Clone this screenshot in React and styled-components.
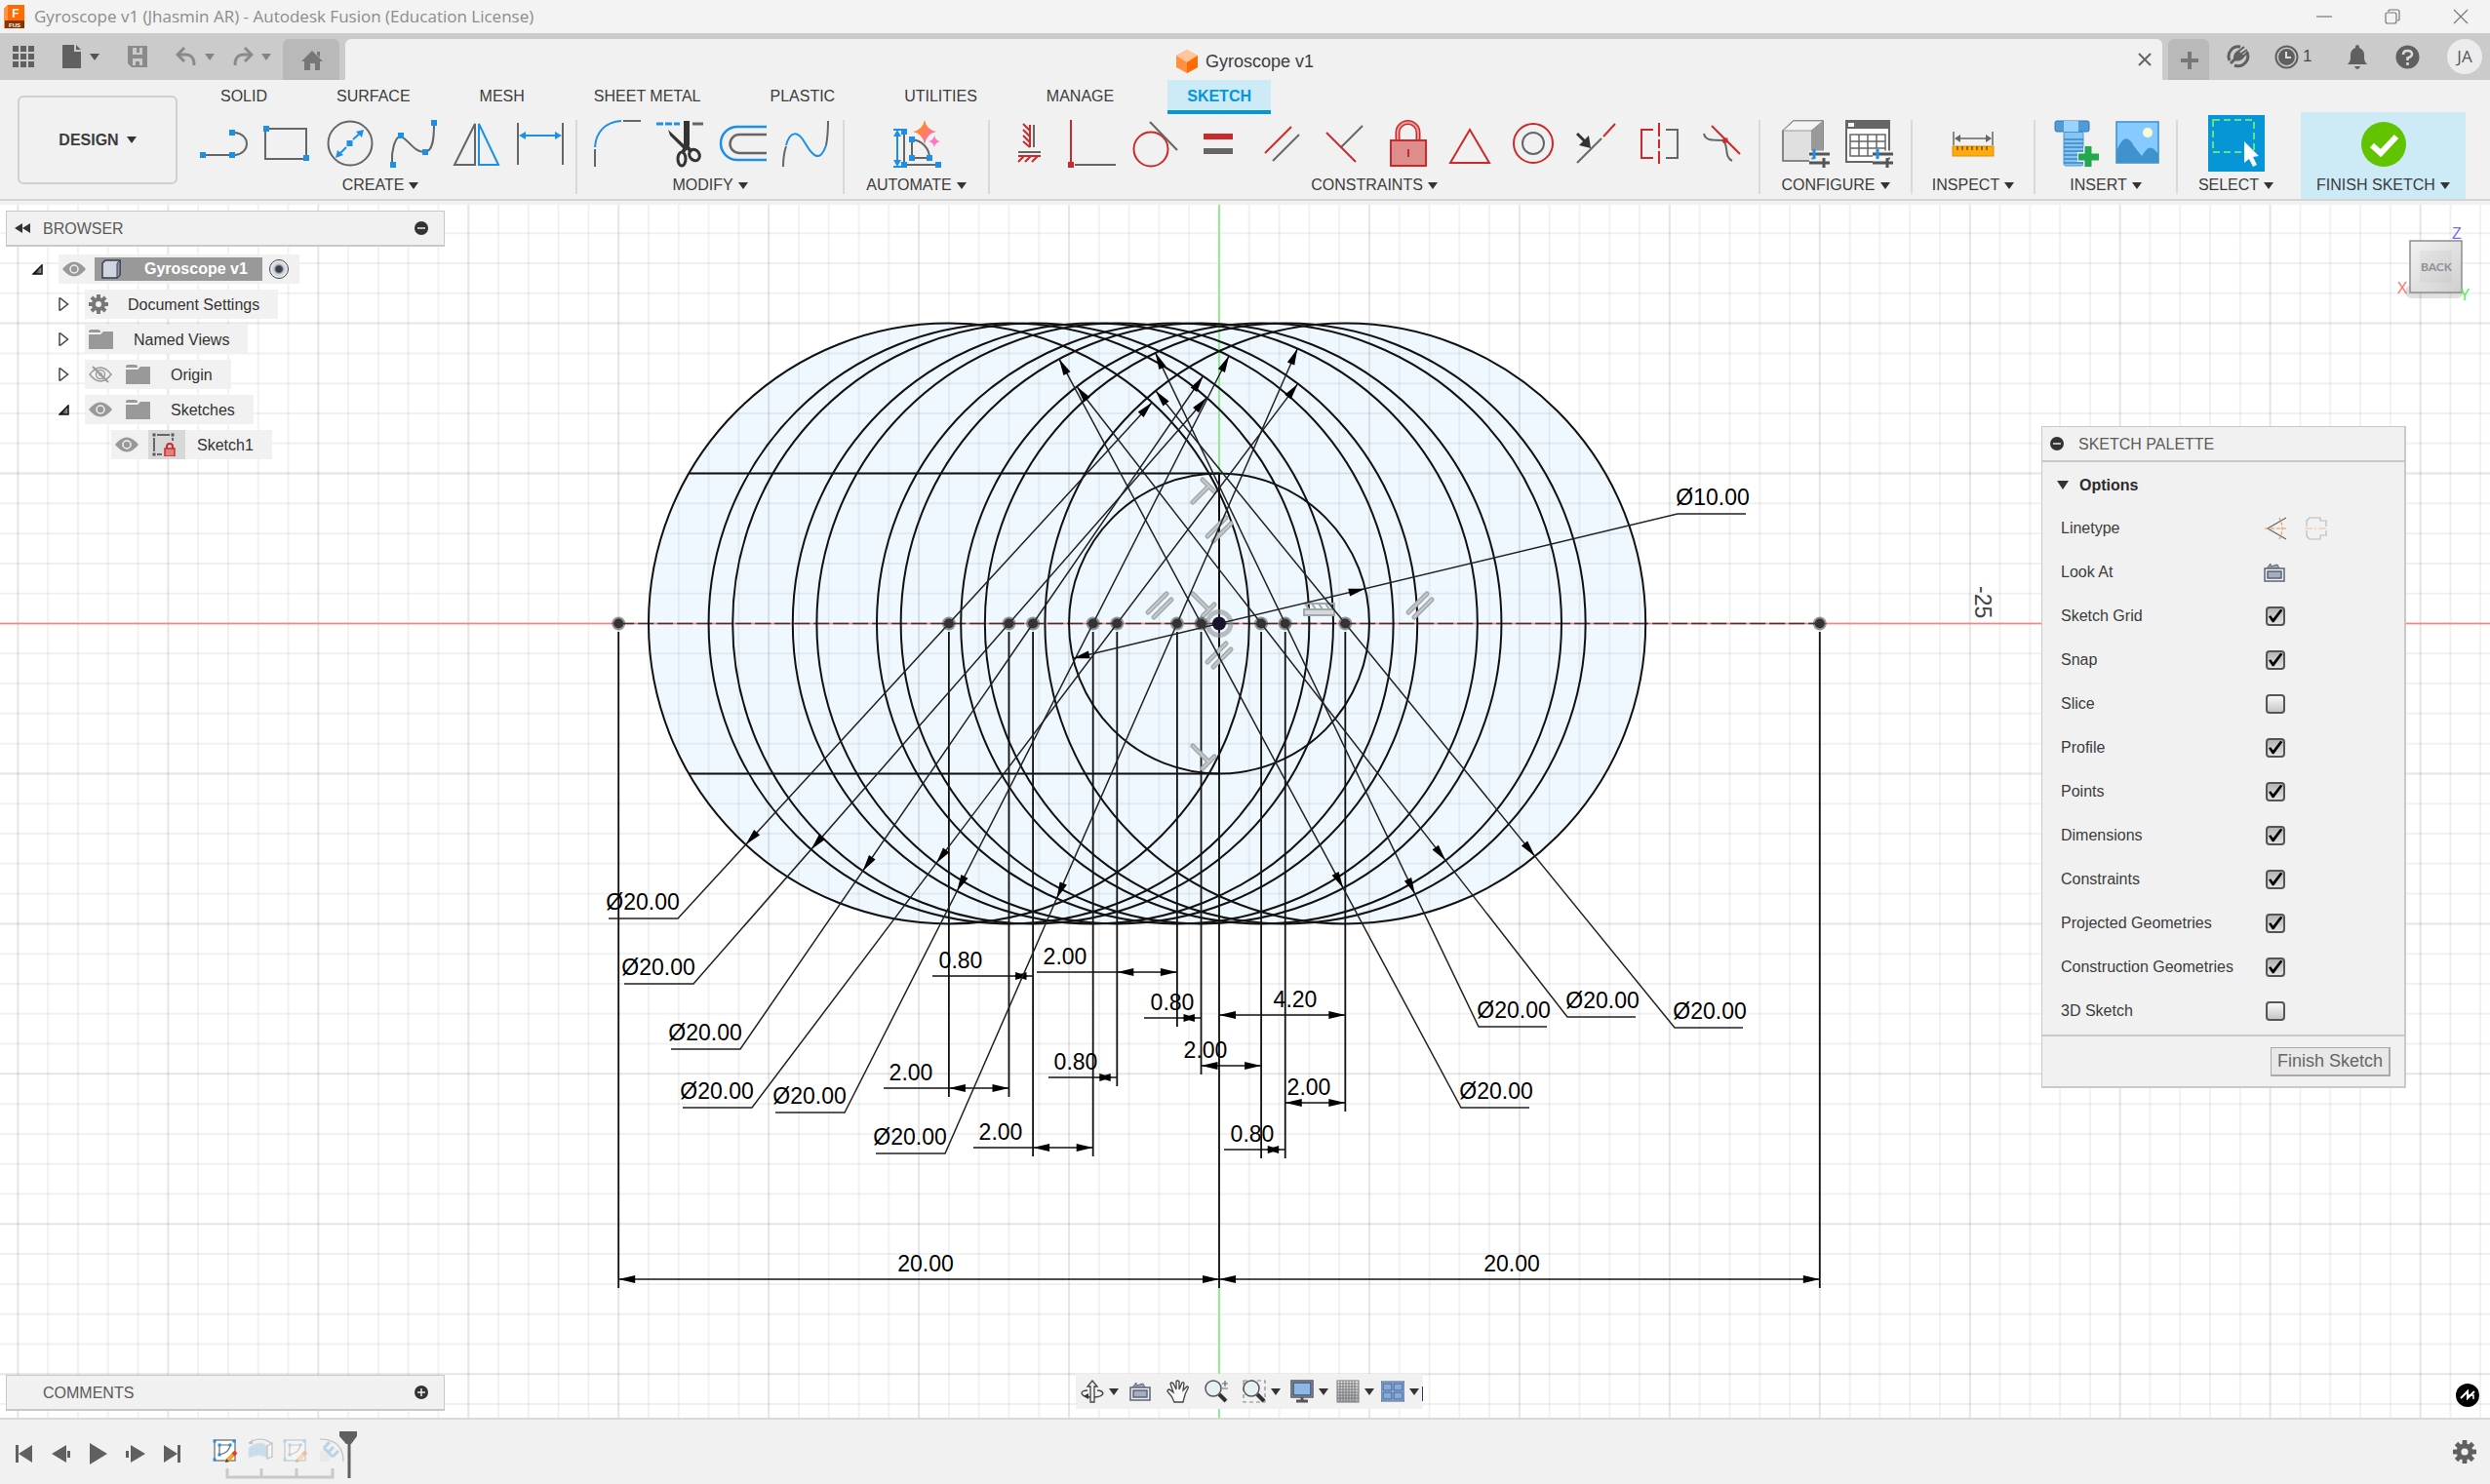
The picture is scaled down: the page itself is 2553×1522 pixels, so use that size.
import React from "react";
import styled, { createGlobalStyle, css } from "styled-components";

const GlobalStyle = createGlobalStyle`
  *, *::before, *::after { box-sizing: border-box; }
  body {
    margin: 0;
    background: #f1f1f1;
    color: #3c3c3c;
    font: 16px/20px "Liberation Sans", Arial, sans-serif;
  }
  button, input { font: inherit; color: inherit; }
  button { background: none; border: 0; padding: 0; cursor: pointer; }
  svg { display: block; flex: none; }
`;

const GRAY = "#666";
const BLUE = "#1c8fe6";
const RED = "#cc2a2a";

/* ---------- shell ---------- */

const Shell = styled.div`
  min-height: 100vh;
  display: flex;
  flex-direction: column;
`;

const TitleBar = styled.header`
  height: 34px;
  flex: none;
  display: flex;
  align-items: center;
  gap: 8px;
  padding-left: 3px;
  background: #f3f3f3;
`;

const WindowTitle = styled.h1`
  margin: 0;
  flex: 1;
  font: 400 17px/22px "Open Sans", "Noto Sans", sans-serif;
  color: #8c8c8c;
`;

const WindowControls = styled.div`
  display: flex;
  gap: 10px;
`;

const WindowButton = styled.button`
  width: 60px;
  height: 32px;
  display: grid;
  place-items: center;
`;

const TabBar = styled.div`
  height: 48px;
  flex: none;
  display: flex;
  align-items: flex-start;
  background: #cbcbcb;
  padding-top: 6px;
`;

const QuickTools = styled.div`
  width: 290px;
  height: 36px;
  flex: none;
  display: flex;
  align-items: center;
  padding-left: 12px;
`;

const ToolButton = styled.button`
  display: flex;
  align-items: center;
  gap: 8px;
  width: ${(p) => p.$w}px;
  height: 36px;
  opacity: ${(p) => (p.$faded ? 0.6 : 1)};
`;

const SideTab = styled.button`
  width: ${(p) => p.$w}px;
  height: 42px;
  flex: none;
  display: grid;
  place-items: center;
  padding: 2px 0 0 2px;
  background: #b9b9b9;
  border-radius: 6px 6px 0 0;
`;

const DocTab = styled.div`
  flex: 1;
  height: 42px;
  margin: 0 6px;
  padding: 0 8px 0 10px;
  display: flex;
  align-items: center;
  background: #f1f1f1;
  border-radius: 6px 6px 0 0;
`;

const DocName = styled.div`
  flex: 1;
  display: flex;
  align-items: center;
  justify-content: center;
  gap: 8px;
  padding-top: 4px;
  font-size: 18px;
  line-height: 24px;
`;

const CloseTab = styled.button`
  width: 20px;
  height: 20px;
  display: grid;
  place-items: center;
`;

const Account = styled.div`
  width: 288px;
  height: 36px;
  flex: none;
  display: flex;
  align-items: center;
  padding-left: 17px;
`;

const JobCount = styled.span`
  font-size: 17px;
  color: #4a4a4a;
  margin-left: -4px;
`;

const Avatar = styled.button`
  width: 36px;
  height: 36px;
  border-radius: 50%;
  background: #ececec;
  color: #555;
  font: 400 17px/36px "Open Sans", "Noto Sans", sans-serif;
`;

/* ---------- ribbon ---------- */

const Ribbon = styled.div`
  height: 128px;
  flex: none;
  display: flex;
  background: #f1f1f1;
  padding-bottom: 4px;
`;

const RibbonInner = styled.div`
  flex: 1;
  display: flex;
  border-bottom: 2px solid #d5d5d5;
`;

const Workspace = styled.button`
  width: 164px;
  height: 91px;
  margin: 16px 8px 0 18px;
  flex: none;
  display: flex;
  align-items: center;
  justify-content: center;
  gap: 8px;
  border: 2px solid #d0d0d0;
  border-radius: 6px;
  font-weight: 700;
`;

const RibbonMain = styled.div`
  flex: 1;
  display: flex;
  flex-direction: column;
`;

const TabList = styled.nav`
  display: flex;
  gap: 31px;
  height: 35px;
  padding-left: 16px;
`;

const RibbonTab = styled.button`
  height: 35px;
  padding: 2px 20px 0;
  border-bottom: 4px solid transparent;
  ${(p) =>
    p.$active &&
    css`
      margin-left: 4px;
      background: #cdeaf7;
      border-color: #0696d7;
      color: #0696d7;
      font-weight: 700;
    `}
`;

const Groups = styled.div`
  flex: 1;
  display: flex;
`;

const Group = styled.section`
  width: ${(p) => p.$w}px;
  height: 76px;
  margin-top: 6px;
  display: flex;
  flex-direction: column;
  justify-content: space-between;
  border-right: 2px solid ${(p) => (p.$last ? "transparent" : "#d9d9d9")};
`;

const Icons = styled.div`
  display: flex;
  justify-content: ${(p) => (p.$single ? "center" : "space-between")};
  padding: 0 ${(p) => Math.max(p.$pad - 3, 0)}px 0 ${(p) => p.$pad}px;
`;

const IconButton = styled.button`
  width: 48px;
  height: 48px;
`;

const Caption = styled.button`
  display: flex;
  align-items: center;
  justify-content: center;
  gap: 5px;
  line-height: 18px;
`;

const Caret = styled.i`
  width: 0;
  height: 0;
  flex: none;
  border: 5px solid transparent;
  border-top: 7px solid ${(p) => p.$color || "#333"};
  border-bottom: 0;
`;

const SelectTile = styled.button`
  width: 58px;
  height: 58px;
  margin: -5px 0 -5px;
  background: #0696d7;
`;

const FinishGroup = styled.section`
  width: 169px;
  margin: -2px 27px 0 5px;
  padding: 9px 0 5px;
  display: flex;
  flex-direction: column;
  align-items: center;
  justify-content: space-between;
  background: #cdeaf7;
`;

/* ---------- canvas ---------- */

const Stage = styled.main`
  flex: 1;
  position: relative;
  display: flex;
  background: #fff;
`;

const Drawing = styled.svg`
  position: absolute;
  inset: 0;
  width: 100%;
  height: 100%;
`;

const Overlay = styled.div`
  position: relative;
  flex: 1;
  display: grid;
  grid-template-columns: 450px 1fr 447px;
  padding: 6px 0 7px 6px;
`;

const LeftColumn = styled.aside`
  display: flex;
  flex-direction: column;
  justify-content: space-between;
`;

const PanelBar = styled.div`
  height: 37px;
  display: flex;
  align-items: center;
  padding: 0 16px 0 8px;
  background: #f1f1f1;
  border: 1px solid #c9c9c9;
  border-bottom-width: 2px;
  color: #5a5a5a;
`;

const PanelTitle = styled.h2`
  flex: 1;
  margin: 0 0 0 ${(p) => p.$gap}px;
  padding-top: 2px;
  font-size: 16px;
  line-height: 20px;
  font-weight: 400;
`;

const Tree = styled.ul`
  list-style: none;
  margin: 8px 0 0;
  padding: 0;
  display: flex;
  flex-direction: column;
  gap: 6px;
`;

const TreeRow = styled.li`
  display: flex;
  align-items: center;
  height: 30px;
  padding-left: ${(p) => 27 + p.$level * 27}px;
`;

const Twisty = styled.button`
  width: 27px;
  height: 30px;
  flex: none;
  display: flex;
  align-items: center;
`;

const Cells = styled.div`
  height: 30px;
  display: flex;
  align-items: center;
  background: #f1f1f1;
`;

const Cell = styled.span`
  width: ${(p) => p.$w || 38}px;
  height: 30px;
  display: flex;
  align-items: center;
  padding-left: 4px;
  background: ${(p) => (p.$shaded ? "#d8d8d8" : "transparent")};
`;

const NodeName = styled.span`
  padding: 1px 19px 0 ${(p) => p.$left}px;
  color: #333;
`;

const Selected = styled.span`
  height: 24px;
  display: flex;
  align-items: center;
  gap: 24px;
  padding: 0 15px 0 7px;
  background: #999;
  color: #fff;
  font-weight: 700;
`;

const ActiveRadio = styled.input`
  appearance: none;
  width: 20px;
  height: 20px;
  margin: 0 11px 0 7px;
  border: 1px solid #444;
  border-radius: 50%;
  background: radial-gradient(circle, #3a3f48 0 3px, #c3c8d3 5px, #f4f5f8 9px);
`;

const NavArea = styled.div`
  display: flex;
  align-items: flex-end;
  justify-content: center;
`;

const NavBar = styled.div`
  width: 356px;
  height: 36px;
  margin-bottom: 2px;
  display: flex;
  align-items: center;
  padding-left: 5px;
  background: #f1f1f1;
`;

const NavButton = styled.button`
  width: ${(p) => p.$w}px;
  flex: none;
  display: flex;
  align-items: center;
  gap: 5px;
`;

const NavEnd = styled.span`
  width: 1px;
  height: 15px;
  margin: 4px 0 0 auto;
  background: #2f3e5c;
`;

const RightColumn = styled.aside`
  display: flex;
  flex-direction: column;
  align-items: flex-end;
`;

const Palette = styled.form`
  width: 374px;
  margin: 221px 86px 0 0;
  background: #f1f1f1;
  border: 1px solid #c9c9c9;
  border-width: 1px 2px 2px 1px;
`;

const PaletteHeader = styled.div`
  height: 36px;
  display: flex;
  align-items: center;
  padding-left: 8px;
  border-bottom: 2px solid #c9c9c9;
  color: #5a5a5a;
`;

const PaletteBody = styled.div`
  padding-bottom: 2px;
`;

const SectionToggle = styled.button`
  width: 100%;
  height: 45px;
  display: flex;
  align-items: center;
  gap: 11px;
  padding: 2px 0 0 15px;
  font-weight: 700;
  color: #2b2b2b;
`;

const BigCaret = styled.i`
  width: 0;
  height: 0;
  border: 6px solid transparent;
  border-top: 9px solid #333;
  border-bottom: 0;
`;

const Option = styled.div`
  height: 45px;
  display: flex;
  align-items: center;
  padding-left: 19px;
`;

const OptionLabel = styled.label`
  width: 210px;
`;

const OptionTools = styled.span`
  display: flex;
  gap: 18px;
  margin-left: -2px;
`;

const Tick = styled.input`
  appearance: none;
  width: 20px;
  height: 20px;
  margin: 0;
  border: 2px solid #555;
  border-radius: 4px;
  background: linear-gradient(#f8f8f8, #c6c6c6);
  &:checked {
    background: linear-gradient(#b4b4b4, #e2e2e2);
  }
  &:checked::after {
    content: "";
    display: block;
    width: 16px;
    height: 16px;
    background: #000;
    clip-path: polygon(6% 55%, 20% 48%, 35% 68%, 82% 8%, 96% 16%, 40% 92%, 30% 92%);
  }
`;

const PaletteFooter = styled.div`
  height: 53px;
  display: flex;
  align-items: center;
  justify-content: flex-end;
  padding-right: 14px;
  border-top: 2px solid #c9c9c9;
`;

const FinishButton = styled.button`
  height: 30px;
  padding: 0 6px;
  background: #e8e8e8;
  border: 1px solid #aaa;
  border-width: 1px 2px 2px 1px;
  font-size: 18px;
  color: #666;
`;

const Badge = styled.button`
  width: 24px;
  height: 24px;
  margin: auto 11px 4px 0;
  border-radius: 50%;
  background: #000;
`;

/* ---------- timeline ---------- */

const Timeline = styled.footer`
  height: 68px;
  flex: none;
  display: flex;
  background: #f1f1f1;
  border-top: 2px solid #d9d9d9;
  padding: 0 14px 0 6px;
`;

const Playback = styled.div`
  width: 207px;
  height: 70px;
  display: flex;
  align-items: center;
`;

const PlayButton = styled.button`
  width: 38px;
  height: 36px;
  display: grid;
  place-items: center;
`;

const Features = styled.div`
  flex: 1;
  padding-top: 12px;
`;

const Gear = styled.button`
  align-self: center;
  height: 24px;
`;

/* ---------- icons ---------- */

const Svg = ({ s = 48, w, h, vb, children, ...rest }) => (
  <svg
    width={w || s}
    height={h || s}
    viewBox={vb || `0 0 ${w || s} ${h || s}`}
    fill="none"
    stroke={GRAY}
    strokeWidth="2"
    aria-hidden="true"
    {...rest}
  >
    {children}
  </svg>
);

const Dot = ({ x, y, c = BLUE, r = 3 }) => (
  <rect x={x - r} y={y - r} width={r * 2} height={r * 2} fill={c} stroke="none" />
);

const Sliders = () => (
  <g strokeWidth="3">
    <path d="M28 35H48M28 44H48" stroke="#f1f1f1" strokeWidth="7" />
    <path d="M28 35H49M28 44H49M43 39V49" stroke="#555" />
    <path d="M33 30V40" stroke={BLUE} />
  </g>
);

const icons = {
  line: (
    <>
      <path d="M3 36H33M36 13C52 15 52 34 36 36" />
      <Dot x={3} y={36} /><Dot x={33} y={36} /><Dot x={33} y={13} />
    </>
  ),
  rect: (
    <>
      <rect x="2" y="9" width="42" height="31" />
      <Dot x={3} y={9} /><Dot x={44} y={39} />
    </>
  ),
  circle: (
    <>
      <circle cx="24" cy="24" r="22.500" />
      <path d="M11 37L20 28M27 20L36 12" stroke={BLUE} />
      <path d="M9 39L11 31L17 36ZM38 10L36 18L30 12Z" fill={BLUE} stroke="none" />
      <Dot x={23.500} y={24} />
    </>
  ),
  spline: (
    <>
      <path d="M2 44C1 32 5 18 10 17C18 18 24 34 36 33C43 32 45 22 45 5" />
      <Dot x={3} y={46} /><Dot x={11} y={16} /><Dot x={36} y={33} /><Dot x={45} y={3} />
    </>
  ),
  mirror: (
    <>
      <path d="M1 46H22V4Z" />
      <path d="M26 46H46L26 4Z" stroke={BLUE} />
    </>
  ),
  dim: (
    <>
      <path d="M1 3V46M47 3V46" />
      <path d="M4 16H44" stroke={BLUE} />
      <path d="M2 16L9 12V20ZM46 16L39 12V20Z" fill={BLUE} stroke="none" />
    </>
  ),
  fillet: (
    <>
      <path d="M1 30V48M30 1H48" />
      <path d="M1 28C2 12 12 2 28 1" stroke={BLUE} />
    </>
  ),
  trim: (
    <>
      <path d="M0 4H24" stroke={BLUE} strokeDasharray="7 2" strokeWidth="3" />
      <path d="M37 4H48" strokeWidth="3" />
      <path d="M28 1L34 1V26L30 32L14 16L12 10L28 25Z" fill="#333" stroke="none" />
      <ellipse cx="26" cy="40" rx="4" ry="7" stroke="#333" strokeWidth="3" />
      <ellipse cx="39" cy="36" rx="5" ry="6" stroke="#333" strokeWidth="3" transform="rotate(-35 39 36)" />
      <path d="M27 33L31 27L36 33" stroke="#333" strokeWidth="4" />
    </>
  ),
  offset: (
    <>
      <path d="M48 7H18A17 17 0 0 0 18 41H48" stroke={BLUE} strokeWidth="2.500" />
      <path d="M48 15H20A9.500 9.500 0 0 0 20 34H48" strokeWidth="2.500" />
    </>
  ),
  curve: (
    <>
      <path d="M1 48C1 40 2 33 4 27M45 26Q47 16 47 1" />
      <path d="M4 26C8 11 16 11 23 23S38 46 45 26" stroke={BLUE} />
    </>
  ),
  automate: (
    <>
      <defs>
        <linearGradient id="spark" x1="0" y1="0" x2="1" y2="1">
          <stop offset="0.300" stopColor="#ff8a2b" />
          <stop offset="0.800" stopColor="#ff6ab8" />
        </linearGradient>
      </defs>
      <path d="M4 12V46M0 10H8M0 48H8" stroke={BLUE} />
      <path d="M4 10L8 17H0ZM4 48L8 41H0Z" fill={BLUE} stroke="none" />
      <path d="M11 12V46H46M19 20V39H37C37 30 30 21 19 20Z" />
      <Dot x={11} y={12} /><Dot x={11} y={46} /><Dot x={46} y={46} />
      <Dot x={19} y={20} /><Dot x={19} y={39} /><Dot x={37} y={39} />
      <path d="M32 0Q34 10 44 12Q34 14 32 25Q30 14 20 12Q30 10 32 0Z" fill="url(#spark)" stroke="none" />
      <path d="M42 16Q43 21 48 22Q43 23 42 28Q41 23 36 22Q41 21 42 16Z" fill="#ff77c0" stroke="none" />
    </>
  ),
  horver: (
    <>
      <path d="M28 5V28M12 33H35" />
      <path d="M24 5V28M24 11L17 4M24 17L17 10M24 23L17 16M24 28L17 22M12 37H35M18 37L12 43M25 37L19 43M32 37L26 43" stroke={RED} />
    </>
  ),
  coincident: (
    <>
      <path d="M2 0V43" stroke={RED} /><Dot x={2} y={46} c={RED} /><path d="M6 46H48" />
    </>
  ),
  tangent: (
    <>
      <circle cx="19" cy="30" r="17.500" stroke={RED} /><path d="M18 2L46 31" />
    </>
  ),
  equal: (
    <>
      <rect x="9" y="14" width="30" height="6" fill={RED} stroke="none" />
      <rect x="9" y="29" width="30" height="6" fill={GRAY} stroke="none" />
    </>
  ),
  parallel: (
    <>
      <path d="M7 34L34 7" stroke={RED} /><path d="M15 42L42 15" />
    </>
  ),
  perp: (
    <>
      <path d="M21 28L43 6" /><path d="M6 13L36 43" stroke={RED} />
    </>
  ),
  lock: (
    <>
      <path d="M14 21V13A10.500 10.500 0 0 1 35 13V21" stroke={RED} strokeWidth="5" />
      <path d="M14 21V13A10.500 10.500 0 0 1 35 13V21" stroke="#e89a9a" strokeWidth="2" />
      <rect x="7" y="21" width="36" height="26" fill="#de8c8c" stroke={RED} />
      <path d="M25 30V38" stroke={RED} />
    </>
  ),
  triangle: <path d="M24 10L44 44H4Z" stroke={RED} />,
  concentric: (
    <>
      <circle cx="24" cy="24" r="20" stroke={RED} /><circle cx="24" cy="24" r="11" />
    </>
  ),
  midpoint: (
    <>
      <path d="M5 44L30 19" /><path d="M32 17L44 4" stroke={RED} />
      <path d="M5 14L13 22" stroke="#333" strokeWidth="3" />
      <path d="M19 29L17 16L7 26Z" fill="#333" stroke="none" />
    </>
  ),
  symmetry: (
    <>
      <path d="M18 10H6V39H18M24 3V17M24 20V29M24 32V45" stroke={RED} />
      <path d="M31 10H43V39H31" />
    </>
  ),
  curvature: (
    <>
      <path d="M6 14C8 23 18 20 25 21C32 24 26 38 35 42" />
      <path d="M14 6L43 35" stroke={RED} /><Dot x={28} y={21} c={RED} r={2.500} />
    </>
  ),
  configure: (
    <>
      <path d="M1 11L12 1H42V31L30 42H1Z" fill="#e0e0e0" strokeWidth="1.500" />
      <path d="M30 11L42 1V31L30 42Z" fill="#999" stroke="none" />
      <path d="M1 11L12 1H42L30 11Z" fill="#f4f4f4" stroke="#999" strokeWidth="1" />
      <Sliders />
    </>
  ),
  table: (
    <>
      <rect x="1" y="1" width="44" height="42" fill="#fff" strokeWidth="2" />
      <rect x="0" y="0" width="46" height="9" fill="#666" stroke="none" />
      <rect x="3" y="3" width="6" height="4" fill="#fff" stroke="none" />
      <path d="M5 15H41V37H5ZM5 22H41M5 29H41M14 15V37M23 15V37M32 15V29" strokeWidth="1.500" />
      <Sliders />
    </>
  ),
  measure: (
    <>
      <path d="M4 12V26M44 12V26M6 19H42" strokeWidth="1.500" />
      <path d="M5 19L11 15V23ZM43 19L37 15V23Z" fill={GRAY} stroke="none" />
      <rect x="3" y="27" width="42" height="10" fill="#ffab0f" stroke="#e08e00" strokeWidth="1" />
      <path d="M8 27V31M13 27V31M18 27V31M23 27V31M28 27V31M33 27V31M38 27V31" stroke="#7a5200" strokeWidth="1.500" />
    </>
  ),
  bolt: (
    <>
      <rect x="11" y="12" width="20" height="35" rx="2" fill="#84c4f7" stroke="#4f98d0" strokeWidth="1" />
      <path d="M11 20H31M11 24H31M11 28H31M11 32H31M11 36H31M11 40H31M11 44H31" stroke="#3f86bf" strokeWidth="1.500" />
      <rect x="2" y="1" width="35" height="11" rx="2" fill="#4f9bd8" stroke="#3579b0" strokeWidth="1" />
      <rect x="11" y="1" width="15" height="11" fill="#9ad2fb" stroke="none" />
      <path d="M36 27V49M25 38H47" stroke="#f1f1f1" strokeWidth="10" />
      <path d="M36 27V48M26 38H47" stroke="#22a84f" strokeWidth="7" />
    </>
  ),
  image: (
    <>
      <rect x="2" y="2" width="43" height="42" fill="#85cbff" stroke="#3b8ecb" strokeWidth="1.500" />
      <path d="M2 44V32C8 17 14 15 20 27L28 37C34 27 38 25 45 35V44Z" fill="#3f92cc" stroke="none" />
      <circle cx="34" cy="13" r="5" fill="#fffbd0" stroke="none" />
    </>
  ),
};

const Window = ({ kind }) => (
  <Svg s={18} strokeWidth="1.200" stroke="#777">
    {kind === "min" && <path d="M1 9H17" />}
    {kind === "max" && <path d="M5 4V3Q5 2 7 2H14Q16 2 16 4V12Q16 13 14 13M2 7Q2 5 4 5H11Q13 5 13 7V14Q13 16 11 16H4Q2 16 2 14Z" />}
    {kind === "close" && <path d="M2 2L16 16M16 2L2 16" />}
  </Svg>
);

const Eye = ({ off }) => (
  <Svg w={24} h={18} stroke="#999">
    {off ? (
      <>
        <path d="M1 9Q12 -5 23 9Q12 23 1 9Z" strokeWidth="1.500" />
        <circle cx="12" cy="9" r="4.500" strokeWidth="1.500" /><circle cx="12" cy="9" r="1.500" strokeWidth="1" />
        <path d="M4 1L20 17" strokeWidth="2" />
      </>
    ) : (
      <>
        <path d="M0 9Q12 -6 24 9Q12 24 0 9Z" fill="#999" stroke="none" />
        <circle cx="12" cy="9" r="4" stroke="#f1f1f1" strokeWidth="1.500" />
      </>
    )}
  </Svg>
);

const Folder = () => (
  <Svg w={25} h={20} stroke="none" fill="#999">
    <path d="M0 2Q0 0 2 0H9Q12 0 12 2V3H0ZM0 5H12L15 2H25V20H0Z" />
  </Svg>
);

const teeth = Array.from({ length: 8 }, (_, i) => i * 45);
const GearIcon = ({ s = 20, hole = "#f1f1f1", c = "#777" }) => (
  <Svg w={s} h={s} vb="0 0 20 20" stroke="none">
    {teeth.map((a) => (
      <rect key={a} x="8" y="0" width="4" height="6" fill={c} transform={`rotate(${a} 10 10)`} />
    ))}
    <circle cx="10" cy="10" r="7" fill={c} />
    <circle cx="10" cy="10" r="3" fill={hole} />
  </Svg>
);

const Round = ({ plus }) => (
  <Svg s={14} stroke="#eee">
    <circle cx="7" cy="7" r="7" fill="#333" stroke="none" />
    <path d={plus ? "M3 7H11M7 3V11" : "M3 7H11"} strokeWidth="1.500" />
  </Svg>
);

const OpenTwist = () => (
  <Svg s={11} stroke="#111" strokeWidth="1">
    <defs>
      <linearGradient id="twist" x1="0" x2="1" y1="0" y2="0">
        <stop offset="0.200" stopColor="#222" />
        <stop offset="1" stopColor="#aaa" />
      </linearGradient>
    </defs>
    <path d="M10 1V10H1Z" fill="url(#twist)" strokeWidth="1.500" />
  </Svg>
);
const ClosedTwist = () => (
  <Svg w={11} h={14} stroke="#444" strokeWidth="1.500"><path d="M1 1H2L9.500 7L2 13H1Z" fill="#fff" /></Svg>
);

const FixedSketch = () => (
  <Svg s={24}>
    <path d="M2 5V19M5 2H18M21 5V8M5 22H10" />
    <Dot x={2} y={2} c="#555" r={1.500} /><Dot x={21} y={2} c="#555" r={1.500} /><Dot x={2} y={22} c="#555" r={1.500} />
    <path d="M15 17V14A3 3 0 0 1 21 14V17" stroke={RED} />
    <rect x="13" y="16" width="10" height="8" fill="#e08080" stroke={RED} strokeWidth="1.500" />
  </Svg>
);

const LookAt = () => (
  <Svg w={22} h={20} stroke="#5c6472" strokeWidth="1.500">
    <path d="M3 6L7 1V4L14 2L16 6" fill="#9aa3b2" strokeWidth="1" />
    <rect x="1" y="6" width="20" height="13" fill="#f0f1f5" />
    <rect x="4" y="9" width="14" height="7" fill="#a5aec0" />
  </Svg>
);

/* ---------- sketch geometry ---------- */

const UNIT = 30.79;
const OX = 1250;
const OY = 639.5;
const px = (u) => OX + u * UNIT;
const R = 10 * UNIT;
const centers = [-9, -7, -6.2, -4.2, -3.4, -1.4, -0.6, 1.4, 2.2, 4.2];
const range = (a, b) => Array.from({ length: b - a + 1 }, (_, i) => a + i);

const extensions = [
  [-20, 1321], [-9, 1125], [-7, 1125], [-6.2, 1186], [-4.2, 1186], [-3.4, 1114], [-1.4, 1053],
  [-0.6, 1102], [0, 1321], [1.4, 1188], [2.2, 1188], [4.2, 1140], [20, 1321],
];

const linear = [
  { a: -20, b: 0, y: 1312, text: "20.00", x: 949 },
  { a: 0, b: 20, y: 1312, text: "20.00", x: 1550 },
  { a: 0, b: 4.2, y: 1041, text: "4.20", x: 1328 },
  { a: -0.6, b: 1.4, y: 1093, text: "2.00", x: 1236 },
  { a: 2.2, b: 4.2, y: 1131, text: "2.00", x: 1342 },
  { a: 1.4, b: 2.2, y: 1179, text: "0.80", x: 1284, from: 1255 },
  { a: -7, b: -6.2, y: 1001, text: "0.80", x: 985, from: 956 },
  { a: -3.4, b: -1.4, y: 997, text: "2.00", x: 1092, from: 1063 },
  { a: -1.4, b: -0.6, y: 1044, text: "0.80", x: 1202, from: 1173 },
  { a: -9, b: -7, y: 1116, text: "2.00", x: 934, from: 906 },
  { a: -4.2, b: -3.4, y: 1105, text: "0.80", x: 1103, from: 1075 },
  { a: -6.2, b: -4.2, y: 1177, text: "2.00", x: 1026, from: 998 },
];

const diameters = [
  { c: -9, x: 695, y: 942, left: true },
  { c: -7, x: 711, y: 1009, left: true },
  { c: -6.2, x: 759, y: 1076, left: true },
  { c: -3.4, x: 771, y: 1136, left: true },
  { c: -4.2, x: 866, y: 1141, left: true },
  { c: -1.4, x: 969, y: 1183, left: true },
  { c: -0.6, x: 1498, y: 1136 },
  { c: 2.2, x: 1516, y: 1053 },
  { c: 1.4, x: 1607, y: 1043 },
  { c: 4.2, x: 1717, y: 1054 },
  { c: 0, x: 1720, y: 527, r: 5, text: "Ø10.00" },
];

const Arrow = ({ x, y, angle, len = 17 }) => (
  <path d={`M0 0L${-len} -4V4Z`} transform={`translate(${x} ${y}) rotate(${angle})`} />
);

const Linear = ({ a, b, y, text, x, from }) => {
  const tight = b - a < 1;
  const len = tight ? 13 : 17;
  const inset = tight ? 5 : 0;
  return (
    <g>
      <path d={`M${from || px(a)} ${y}H${px(b)}`} stroke="#111" strokeWidth="1.500" />
      <Arrow x={px(a) + inset} y={y} angle={180} len={len} />
      <Arrow x={px(b) - inset} y={y} angle={0} len={len} />
      <text x={x} y={y - 8} textAnchor="middle">{text}</text>
    </g>
  );
};

const Diameter = ({ c, x, y, left, r = 10, text = "Ø20.00" }) => {
  const cx = px(c);
  const rad = Math.atan2(y - OY, x - cx);
  const deg = (rad * 180) / Math.PI;
  const dx = Math.cos(rad) * r * UNIT;
  const dy = Math.sin(rad) * r * UNIT;
  const end = left ? x - 71 : x + 70;
  return (
    <g>
      <path d={`M${cx - dx} ${OY - dy}L${x} ${y}H${end}`} stroke="#222" strokeWidth="1.500" fill="none" />
      <Arrow x={cx + dx} y={OY + dy} angle={deg} />
      <Arrow x={cx - dx} y={OY - dy} angle={deg + 180} />
      <text x={left ? x - 36 : x + 36} y={y - 9} textAnchor="middle">{text}</text>
    </g>
  );
};

const glyphStroke = (d) => (
  <g strokeLinecap="round" fill="none">
    <path d={d} stroke="#a3a8ab" strokeWidth="5" />
    <path d={d} stroke="#c4c9cc" strokeWidth="2" />
  </g>
);
const ParallelMark = ({ x, y }) => (
  <g transform={`translate(${x} ${y})`}>{glyphStroke("M-12 7L7 -12M-6 12L12 -6")}</g>
);
const PerpMark = ({ x, y, flip }) => (
  <g transform={`translate(${x} ${y}) scale(1 ${flip ? -1 : 1})`}>
    {glyphStroke("M-11 12L5 -4M-1 -11L11 1")}
  </g>
);

const Sketch = () => (
  <Drawing viewBox="0 210 2553 1244" preserveAspectRatio="xMidYMid slice" role="img" aria-label="Gyroscope sketch">
    <g fill="#eff8fe">
      {centers.map((c) => <circle key={c} cx={px(c)} cy={OY} r={R} />)}
    </g>
    <g stroke="#000" strokeWidth="2">
      {range(-41, 43).map((k) => (
        <path key={`v${k}`} d={`M${px(k)} 0V1600`} strokeOpacity={k % 5 ? 0.055 : 0.1} />
      ))}
      {range(-20, 30).map((k) => (
        <path key={`h${k}`} d={`M-400 ${OY + k * UNIT}H2953`} strokeOpacity={k % 5 ? 0.055 : 0.1} />
      ))}
    </g>
    <path d={`M-400 ${OY}H2953`} stroke="#ff8080" strokeWidth="1.500" />
    <path d={`M${OX} 0V1600`} stroke="#90ee90" strokeWidth="2" />
    <path d={`M${px(-20)} ${OY}H${px(20)}`} stroke="#4a3030" strokeWidth="1.500" strokeDasharray="16 4" />
    <g fill="none" stroke="#111" strokeWidth="2">
      {centers.map((c) => <circle key={c} cx={px(c)} cy={OY} r={R} />)}
      <circle cx={OX} cy={OY} r={5 * UNIT} />
      <path d={`M${px(-17.66)} ${OY - 5 * UNIT}H${OX}M${px(-17.66)} ${OY + 5 * UNIT}H${OX}M${OX} ${OY - 5 * UNIT}V${OY + 5 * UNIT}`} />
    </g>
    <g fill="none" stroke="#111" strokeWidth="1.800">
      {extensions.map(([u, y]) => <path key={u} d={`M${px(u)} 648V${y}`} />)}
    </g>
    <ParallelMark x={1189} y={621} />
    <ParallelMark x={1456} y={621} />
    <ParallelMark x={1250} y={543} />
    <ParallelMark x={1250} y={672} />
    <PerpMark x={1234} y={503} />
    <PerpMark x={1234} y={621} flip />
    <PerpMark x={1234} y={777} flip />
    <circle cx={OX} cy={OY} r="12" fill="none" stroke="#8d9499" strokeOpacity="0.600" strokeWidth="5" />
    <g stroke="#a3a8ab" strokeWidth="2" fill="#d4d9dc">
      <path d="M1338 619L1342 625M1345 619L1349 625M1352 619L1356 625M1359 619L1363 625" />
      <rect x="1337" y="625" width="31" height="6" />
      <path d="M1337 619H1368V631" fill="none" />
    </g>
    <g fontFamily='"Liberation Sans", Arial, sans-serif' fontSize="23" fill="#000">
      {linear.map((d) => <Linear key={`${d.a}/${d.b}`} {...d} />)}
      {diameters.map((d) => <Diameter key={d.c} {...d} />)}
      <text transform="translate(2025 601) rotate(90)" fill="#444">-25</text>
    </g>
    {[-20, ...centers, 20].map((c) => (
      <g key={c} fill="#333">
        <circle cx={px(c)} cy={OY} r="7" fillOpacity="0.500" />
        <circle cx={px(c)} cy={OY} r="5" />
      </g>
    ))}
    <circle cx={OX} cy={OY} r="7" fill="#1a1330" />
    <g fontFamily='"Liberation Sans", Arial, sans-serif' fontSize="16">
      <rect x="2466" y="292" width="60" height="14" rx="7" fill="#000" fillOpacity="0.120" />
      <defs>
        <linearGradient id="cube" x1="0" y1="0" x2="1" y2="1">
          <stop offset="0" stopColor="#f3f3f3" />
          <stop offset="1" stopColor="#cfcfcf" />
        </linearGradient>
      </defs>
      <rect x="2471" y="247" width="53" height="53" fill="url(#cube)" stroke="#8e8e8e" strokeWidth="1.500" />
      <rect x="2481" y="257" width="33" height="33" fill="#000" fillOpacity="0.030" />
      <text x="2498" y="278" textAnchor="middle" fontSize="12" fontWeight="700" fill="#8d9196" fontFamily='Lato, "Open Sans", sans-serif'>BACK</text>
      <text x="2519" y="245" textAnchor="middle" fill="#7070ff">Z</text>
      <text x="2463" y="301" textAnchor="middle" fill="#ff7070">X</text>
      <text x="2527" y="308" textAnchor="middle" fill="#50ee50">Y</text>
    </g>
  </Drawing>
);

/* ---------- sections ---------- */

const ribbonTabs = ["SOLID", "SURFACE", "MESH", "SHEET METAL", "PLASTIC", "UTILITIES", "MANAGE", "SKETCH"];

const groups = [
  { name: "CREATE", w: 402, pad: 15, items: ["line", "rect", "circle", "spline", "mirror", "dim"] },
  { name: "MODIFY", w: 274, pad: 17, items: ["fillet", "trim", "offset", "curve"] },
  { name: "AUTOMATE", w: 149, pad: 0, items: ["automate"] },
  {
    name: "CONSTRAINTS", w: 790, pad: 17,
    items: ["horver", "coincident", "tangent", "equal", "parallel", "perp", "lock", "triangle", "concentric", "midpoint", "symmetry", "curvature"],
  },
  { name: "CONFIGURE", w: 156, pad: 22, items: ["configure", "table"] },
  { name: "INSPECT", w: 126, pad: 0, items: ["measure"] },
  { name: "INSERT", w: 146, pad: 18, items: ["bolt", "image"] },
];

const Header = () => (
  <>
    <TitleBar>
      <Svg w={24} h={26} stroke="none">
        <path d="M1 5L5 1H22V22H1Z" fill="#ff6b00" />
        <path d="M1 5L5 1V25H1Z" fill="#ff9447" />
        <path d="M2 17H22V25H2Z" fill="#8a3200" />
        <text x="13" y="14" textAnchor="middle" fontSize="12" fontWeight="700" fill="#fff" fontFamily="Liberation Sans, Arial, sans-serif">F</text>
        <text x="12" y="24" textAnchor="middle" fontSize="6" fontWeight="700" fill="#fff" fontFamily="Liberation Sans, Arial, sans-serif">FUS</text>
      </Svg>
      <WindowTitle>Gyroscope v1 (Jhasmin AR) - Autodesk Fusion (Education License)</WindowTitle>
      <WindowControls>
        <WindowButton aria-label="Minimize"><Window kind="min" /></WindowButton>
        <WindowButton aria-label="Restore"><Window kind="max" /></WindowButton>
        <WindowButton aria-label="Close"><Window kind="close" /></WindowButton>
      </WindowControls>
    </TitleBar>
    <TabBar>
      <QuickTools>
        <ToolButton $w={51} aria-label="Data panel">
          <Svg s={24} stroke="none" fill="#606060">
            {[1, 9, 17].map((x) => [1, 9, 17].map((y) => <rect key={`${x}-${y}`} x={x} y={y} width="6" height="6" />))}
          </Svg>
        </ToolButton>
        <ToolButton $w={67} aria-label="File">
          <Svg w={21} h={24} stroke="none" fill="#606060"><path d="M1 1Q1 0 2 0H13V7H20V24H1ZM15 0L20 5H15Z" /></Svg>
          <Caret $color="#555" />
        </ToolButton>
        <ToolButton $w={50} $faded aria-label="Save">
          <Svg w={22} h={24} stroke="none" fill="#606060"><path fillRule="evenodd" d="M1 1H21V23H5L1 19ZM6 3V10H16V3ZM6 14V21H9V17H13V21H16V14Z" /><rect x="10" y="3" width="3" height="5" /></Svg>
        </ToolButton>
        <ToolButton $w={58} $faded aria-label="Undo">
          <Svg w={22} h={24} stroke="#606060" strokeWidth="3"><path d="M9 3L2 10L9 17M3 10H10C17 10 19 14 19 21" /></Svg>
          <Caret $color="#555" />
        </ToolButton>
        <ToolButton $w={50} $faded aria-label="Redo">
          <Svg w={22} h={24} stroke="#606060" strokeWidth="3"><path d="M13 3L20 10L13 17M19 10H12C5 10 3 14 3 21" /></Svg>
          <Caret $color="#555" />
        </ToolButton>
      </QuickTools>
      <SideTab $w={58} aria-label="Home">
        <Svg w={24} h={22} stroke="none" fill="#777"><path d="M12 1L23 12H20V21H15V14H10V21H4V12H1ZM17 2H20V8L17 5Z" /></Svg>
      </SideTab>
      <DocTab>
        <DocName>
          <Svg w={22} h={24} stroke="none">
            <path d="M11 0L22 6V18L11 24L0 18V6Z" fill="#ff9140" />
            <path d="M11 0L22 6L11 13L0 6Z" fill="#ffc59b" />
            <path d="M22 6V18L11 24V13Z" fill="#ff6b00" />
          </Svg>
          Gyroscope v1
        </DocName>
        <CloseTab aria-label="Close document">
          <Svg s={14} stroke="#666"><path d="M1 1L13 13M13 1L1 13" /></Svg>
        </CloseTab>
      </DocTab>
      <SideTab $w={42} aria-label="New document">
        <Svg s={20} stroke="#777" strokeWidth="4"><path d="M10 1V19M1 10H19" /></Svg>
      </SideTab>
      <Account>
        <ToolButton $w={50} aria-label="Extensions">
          <Svg s={26} stroke="#606060" strokeWidth="3">
            <path d="M15 3A10 10 0 0 0 4 17M9 22A10 10 0 0 0 22 9" />
            <path d="M5 20L10 15" strokeWidth="3" />
            <path d="M9 16Q8 10 14 7L19 3M16 10L22 6M9 16Q15 18 19 12L23 8" strokeWidth="2" />
            <path d="M9 16Q8 10 14 8L19 12Q16 18 9 16Z" fill="#606060" stroke="none" />
          </Svg>
        </ToolButton>
        <ToolButton $w={74} aria-label="Job status">
          <Svg s={25} stroke="#606060">
            <circle cx="12.500" cy="12.500" r="11" /><circle cx="12.500" cy="12.500" r="8.500" fill="#606060" stroke="none" />
            <path d="M12 7V13H17" stroke="#ddd" />
          </Svg>
          <JobCount>1</JobCount>
        </ToolButton>
        <ToolButton $w={50} aria-label="Notifications">
          <Svg w={22} h={25} stroke="none" fill="#606060"><path d="M11 0Q13 0 13 3Q19 5 18 14Q18 17 21 20H1Q4 17 4 14Q3 5 9 3Q9 0 11 0ZM8 22H14Q13 25 11 25Q9 25 8 22Z" /></Svg>
        </ToolButton>
        <ToolButton $w={53} aria-label="Help">
          <Svg s={25} stroke="#ddd"><circle cx="12.500" cy="12.500" r="12" fill="#606060" stroke="none" />
            <path d="M8 10Q8 6 12.500 6Q17 6 17 9.500Q17 12 12.500 13.500V16M12.500 18V21" strokeWidth="2.500" /></Svg>
        </ToolButton>
        <Avatar>JA</Avatar>
      </Account>
    </TabBar>
  </>
);

const Toolbar = () => (
  <Ribbon>
    <RibbonInner>
      <Workspace aria-haspopup="menu">DESIGN <Caret /></Workspace>
      <RibbonMain>
        <TabList>
          {ribbonTabs.map((t) => <RibbonTab key={t} $active={t === "SKETCH"}>{t}</RibbonTab>)}
        </TabList>
        <Groups>
          {groups.map((g) => (
            <Group key={g.name} $w={g.w}>
              <Icons $pad={g.pad} $single={g.items.length === 1}>
                {g.items.map((i) => <IconButton key={i} aria-label={i}><Svg overflow="visible">{icons[i]}</Svg></IconButton>)}
              </Icons>
              <Caption>{g.name} <Caret /></Caption>
            </Group>
          ))}
          <Group $w={121} $last>
            <Icons $single $pad={0}>
              <SelectTile aria-label="Select">
                <Svg w={58} h={58}>
                  <rect x="5" y="5" width="42" height="33" stroke="#62e08a" strokeDasharray="7 4" />
                  <path d="M37 27L52 42L46 43L50 51L46 53L42 45L37 49Z" fill="#fff" stroke="none" />
                </Svg>
              </SelectTile>
            </Icons>
            <Caption>SELECT <Caret /></Caption>
          </Group>
          <FinishGroup>
            <IconButton aria-label="Finish">
              <Svg><circle cx="24" cy="24" r="23" fill="#62c400" stroke="none" /><path d="M12 25L21 33L37 16" stroke="#fff" strokeWidth="6" /></Svg>
            </IconButton>
            <Caption>FINISH SKETCH <Caret /></Caption>
          </FinishGroup>
        </Groups>
      </RibbonMain>
    </RibbonInner>
  </Ribbon>
);

const BrowserTree = () => (
  <div>
    <PanelBar>
      <Svg w={16} h={10} stroke="none" fill="#333"><path d="M0 5L8 0V10ZM8 5L16 0V10Z" /></Svg>
      <PanelTitle $gap={13}>BROWSER</PanelTitle>
      <Round />
    </PanelBar>
    <Tree>
      <TreeRow $level={0}>
        <Twisty aria-label="Collapse"><OpenTwist /></Twisty>
        <Cells>
          <Cell $w={37}><Eye /></Cell>
          <Selected>
            <Svg s={20} stroke="#3a3f48" strokeWidth="1.500"><path d="M1 4L4 1H19V16L16 19H1Z" fill="#cfd6e2" /><path d="M16 19V4L19 1V16Z" fill="#8f98a8" strokeWidth="1" /></Svg>
            Gyroscope v1
          </Selected>
          <ActiveRadio type="radio" defaultChecked aria-label="Activate component" />
        </Cells>
      </TreeRow>
      <TreeRow $level={1}>
        <Twisty aria-label="Expand"><ClosedTwist /></Twisty>
        <Cells><Cell $w={31}><GearIcon /></Cell><NodeName $left={13}>Document Settings</NodeName></Cells>
      </TreeRow>
      <TreeRow $level={1}>
        <Twisty aria-label="Expand"><ClosedTwist /></Twisty>
        <Cells><Cell><Folder /></Cell><NodeName $left={12}>Named Views</NodeName></Cells>
      </TreeRow>
      <TreeRow $level={1}>
        <Twisty aria-label="Expand"><ClosedTwist /></Twisty>
        <Cells><Cell><Eye off /></Cell><Cell><Folder /></Cell><NodeName $left={12}>Origin</NodeName></Cells>
      </TreeRow>
      <TreeRow $level={1}>
        <Twisty aria-label="Collapse"><OpenTwist /></Twisty>
        <Cells><Cell><Eye /></Cell><Cell><Folder /></Cell><NodeName $left={12}>Sketches</NodeName></Cells>
      </TreeRow>
      <TreeRow $level={3}>
        <Cells><Cell><Eye /></Cell><Cell $shaded><FixedSketch /></Cell><NodeName $left={12}>Sketch1</NodeName></Cells>
      </TreeRow>
    </Tree>
  </div>
);

const options = [
  ["Sketch Grid", true], ["Snap", true], ["Slice", false], ["Profile", true], ["Points", true],
  ["Dimensions", true], ["Constraints", true], ["Projected Geometries", true],
  ["Construction Geometries", true], ["3D Sketch", false],
];

const SketchPalette = () => (
  <Palette onSubmit={(e) => e.preventDefault()}>
    <PaletteHeader><Round /><PanelTitle $gap={15}>SKETCH PALETTE</PanelTitle></PaletteHeader>
    <PaletteBody>
      <SectionToggle type="button"><BigCaret />Options</SectionToggle>
      <Option>
        <OptionLabel as="span">Linetype</OptionLabel>
        <OptionTools>
          <button type="button" aria-label="Construction">
            <Svg s={24} strokeWidth="1.200"><path d="M23 1L4 12L23 23" /><path d="M1 12H24" stroke="#f0954f" strokeDasharray="4 2" /><path d="M16 1Q22 12 16 23" stroke="#f0954f" strokeDasharray="3 2" /></Svg>
          </button>
          <button type="button" aria-label="Centerline">
            <Svg s={24} strokeWidth="1.200" stroke="#bbb"><path d="M2 10V4L5 1H16V4H22V10M2 14V20L5 23H16V19H22V14" /><path d="M0 12H24" stroke="#f7b98e" strokeDasharray="8 2 2 2" /></Svg>
          </button>
        </OptionTools>
      </Option>
      <Option>
        <OptionLabel as="span">Look At</OptionLabel>
        <OptionTools><button type="button" aria-label="Look At"><LookAt /></button></OptionTools>
      </Option>
      {options.map(([name, on]) => {
        const id = name.toLowerCase().replace(/ /g, "-");
        return (
          <Option key={name}>
            <OptionLabel htmlFor={id}>{name}</OptionLabel>
            <Tick id={id} type="checkbox" defaultChecked={on} />
          </Option>
        );
      })}
    </PaletteBody>
    <PaletteFooter><FinishButton>Finish Sketch</FinishButton></PaletteFooter>
  </Palette>
);

const Lens = ({ children }) => (
  <>
    {children}
    <path d="M15 15L22 22" stroke="#333" strokeWidth="4" />
    <circle cx="9" cy="9" r="8" fill="#e3f1f3" stroke="#555" strokeWidth="1.500" />
  </>
);

const Navigation = () => (
  <NavBar>
    <NavButton $w={50} aria-label="Orbit">
      <Svg s={24} strokeWidth="1.300" stroke="#444"><path d="M7 11Q1 11 1 14Q2 18 12 18Q22 18 23 14Q22 11 17 11" /><path d="M10 23V7H7L12 1L17 7H14V23Z" fill="#eee" /><path d="M3 17L8 14V20Z" fill="#333" stroke="none" /></Svg>
      <Caret />
    </NavButton>
    <NavButton $w={38} aria-label="Look at"><LookAt /></NavButton>
    <NavButton $w={39} aria-label="Pan">
      <Svg s={24} strokeWidth="1.300" stroke="#444"><path d="M8 23Q6 17 1 12Q1 10 3 10L7 13L4 4Q5 2 7 4L10 10L10 2Q11 0 13 2L13 10L16 3Q18 2 18 4L17 11L21 7Q23 7 22 9Q19 14 18 19L17 23Z" fill="#fafafa" /></Svg>
    </NavButton>
    <NavButton $w={39} aria-label="Zoom"><Svg s={24} strokeWidth="1.500"><Lens><path d="M18 4H24M21 1V7M18 9H24" strokeWidth="1.200" /></Lens></Svg></NavButton>
    <NavButton $w={49} aria-label="Fit"><Svg s={24}><Lens><rect x="1" y="1" width="22" height="22" stroke="#888" strokeWidth="1.200" strokeDasharray="4 3" /></Lens></Svg><Caret /></NavButton>
    <NavButton $w={47} aria-label="Display settings">
      <Svg s={24} strokeWidth="1.500" stroke="#555"><rect x="1" y="1" width="22" height="17" fill="#ddd" /><rect x="3" y="3" width="18" height="13" fill="#8fb7e4" stroke="#38507c" /><path d="M12 18V22M6 22H18" strokeWidth="3" /></Svg>
      <Caret />
    </NavButton>
    <NavButton $w={46} aria-label="Grid and snaps">
      <Svg s={24} strokeWidth="1" stroke="#777">
        <defs>
          <linearGradient id="mesh" x1="0" y1="0" x2="0" y2="1">
            <stop offset="0" stopColor="#f4f4f4" />
            <stop offset="1" stopColor="#a9adb6" />
          </linearGradient>
        </defs>
        <rect x="1" y="1" width="22" height="22" fill="url(#mesh)" />
        <path d="M1 4H23M1 7H23M1 10H23M1 13H23M1 16H23M1 19H23M4 1V23M7 1V23M10 1V23M13 1V23M16 1V23M19 1V23" />
      </Svg>
      <Caret />
    </NavButton>
    <NavButton $w={40} aria-label="Viewports">
      <Svg s={24} strokeWidth="1.500" stroke="#3f5f8f"><path d="M1 3H23V21H1ZM12 3V21M1 12H23" fill="#86abd8" strokeWidth="3" /><path d="M1 3H23V21H1ZM12 3V21M1 12H23" stroke="#a9c4e6" strokeWidth="1" /></Svg>
      <Caret />
    </NavButton>
    <NavEnd />
  </NavBar>
);

const MiniSketch = ({ x, o = 1 }) => (
  <g transform={`translate(${x} 8)`} opacity={o}>
    <rect x="1" y="1" width="21" height="21" fill="#fff" strokeWidth="1.200" />
    <path d="M6 16V6H17Q16 14 6 16Z" strokeWidth="1.200" />
    <Dot x={1} y={2} r={1.500} /><Dot x={21} y={2} r={1.500} /><Dot x={1} y={21} r={1.500} />
    <Dot x={6} y={6} r={1.500} /><Dot x={17} y={6} r={1.500} /><Dot x={6} y={16} r={1.500} />
    <path d="M14 22L21 15" stroke="#f5a623" strokeWidth="4" />
    <path d="M20 16L23 13" stroke="#ee3333" strokeWidth="4" />
    <path d="M12 24L16 23L13 20Z" fill="#444" stroke="none" />
  </g>
);

const TimelineBar = () => (
  <Timeline>
    <Playback>
      <PlayButton aria-label="To start"><Svg w={18} h={18} stroke="none" fill="#606060"><path d="M0 0H3V18H0ZM3 9L17 0V18Z" /></Svg></PlayButton>
      <PlayButton aria-label="Step back"><Svg w={20} h={18} stroke="none" fill="#606060"><path d="M0 9L15 0V18ZM16 6H19V13H16Z" /></Svg></PlayButton>
      <PlayButton aria-label="Play"><Svg w={18} h={22} stroke="none" fill="#606060"><path d="M0 0L18 11L0 22Z" /></Svg></PlayButton>
      <PlayButton aria-label="Step forward"><Svg w={20} h={18} stroke="none" fill="#606060"><path d="M5 0L20 9L5 18ZM0 6H3V13H0Z" /></Svg></PlayButton>
      <PlayButton aria-label="To end"><Svg w={18} h={18} stroke="none" fill="#606060"><path d="M0 0L14 9L0 18ZM14 0H17V18H14Z" /></Svg></PlayButton>
    </Playback>
    <Features>
      <Svg w={160} h={50}>
        <MiniSketch x={6} />
        <g opacity="0.350">
          <path d="M42 17Q53 8 61 15V27Q53 22 42 27Z" fill="#7db9e4" stroke="#a9c8e0" strokeWidth="1" />
          <path d="M61 15L66 12V26L61 28Z" fill="#fff" strokeWidth="1.200" />
          <path d="M42 12Q54 4 65 12" strokeWidth="1.200" />
          <path d="M42 13L46 8V13Z" fill={GRAY} stroke="none" />
        </g>
        <MiniSketch x={78} o={0.3} />
        <g opacity="0.350">
          <path d="M115 8Q139 8 139 31" strokeWidth="1.200" />
          <path d="M115 20Q125 22 126 31H115Z" fill="#ddd" stroke="none" />
          <path d="M119 17L128 26M119 17L125 11M124 21L129 16M128 26L134 20" stroke="#4f9bd8" strokeWidth="3" />
        </g>
        <path d="M20 38V47H128V38M55 38V46M91 38V46" stroke="#c9c9c9" strokeWidth="3" />
        <path d="M135 0H153V5L147 13H142L135 5Z" fill="#606060" stroke="none" />
        <path d="M145 10V48" stroke="#606060" strokeWidth="3" />
      </Svg>
    </Features>
    <Gear aria-label="Timeline settings"><GearIcon s={24} c="#606060" /></Gear>
  </Timeline>
);

export default function App() {
  return (
    <>
      <GlobalStyle />
      <Shell>
        <Header />
        <Toolbar />
        <Stage>
          <Sketch />
          <Overlay>
            <LeftColumn>
              <BrowserTree />
              <PanelBar><PanelTitle $gap={29}>COMMENTS</PanelTitle><Round plus /></PanelBar>
            </LeftColumn>
            <NavArea><Navigation /></NavArea>
            <RightColumn>
              <SketchPalette />
              <Badge aria-label="Assistant">
                <Svg s={24} stroke="#fff"><path d="M5 15L12 8V15L19 8" strokeWidth="2" /><path d="M11 12H18V16" strokeWidth="1.500" /></Svg>
              </Badge>
            </RightColumn>
          </Overlay>
        </Stage>
        <TimelineBar />
      </Shell>
    </>
  );
}
